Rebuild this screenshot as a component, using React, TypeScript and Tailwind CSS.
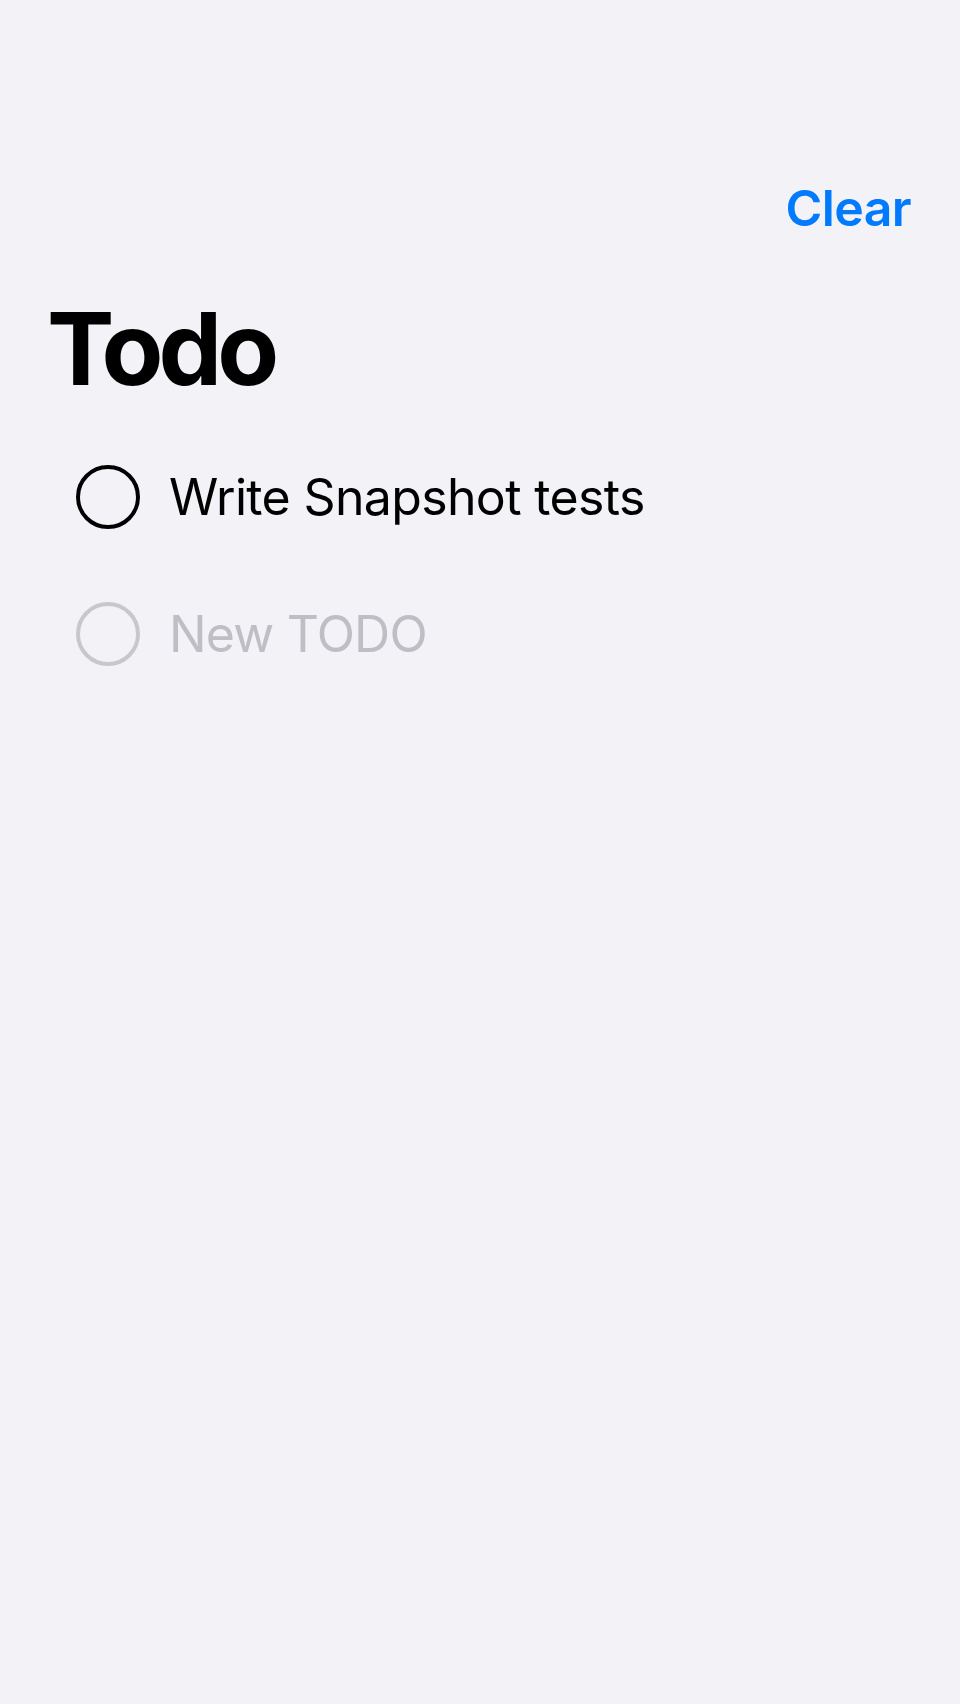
import { useState } from "react";

const todos = [{ id: 1, title: "Write Snapshot tests" }];

function Circle({ muted }: { muted?: boolean }) {
  return (
    <div
      className={
        "w-[64px] h-[64px] shrink-0 rounded-full border-[4px] " +
        (muted ? "border-[#c7c7cc]" : "border-black")
      }
    />
  );
}

export default function App() {
  const [items] = useState(todos);

  return (
    <div className="min-h-screen bg-[#f2f2f7] font-['Inter','Liberation_Sans',sans-serif]">
      <div className="flex justify-end pt-[183px] pr-[49px]">
        <button className="text-[50px] leading-none font-semibold tracking-[-0.6px] text-[#007aff]">Clear</button>
      </div>
      <h1 className="mt-[65px] pl-[47px] text-[101px] leading-none font-bold tracking-[-5px] text-black">
        Todo
      </h1>
      <ul className="mt-[66px] pl-[76px] flex flex-col gap-[73px]">
        {items.map((t) => (
          <li key={t.id} className="flex items-center gap-[29px]">
            <Circle />
            <span className="text-[50px] leading-none tracking-[-0.65px] text-black">{t.title}</span>
          </li>
        ))}
        <li className="flex items-center gap-[29px]">
          <Circle muted />
          <span className="text-[50px] leading-none tracking-[-0.8px] text-[#bfbec4]">New TODO</span>
        </li>
      </ul>
    </div>
  );
}
